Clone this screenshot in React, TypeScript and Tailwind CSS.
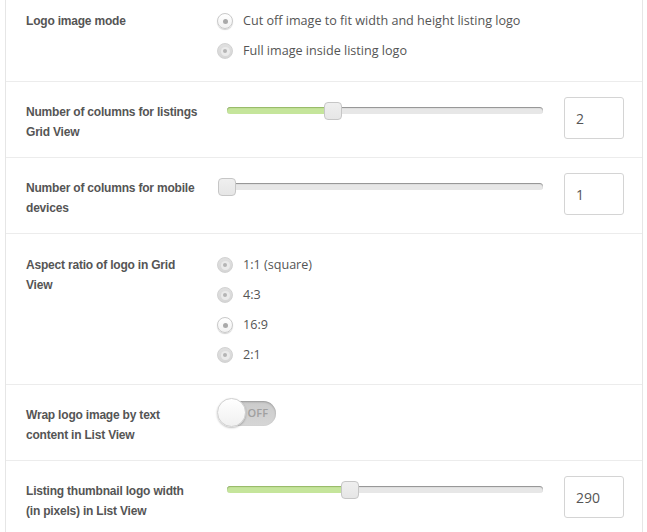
import React from "react";

const labelFont = {
  fontFamily: '"Liberation Sans", Arial, sans-serif',
};
const bodyFont = { fontFamily: '"Open Sans", "Noto Sans", sans-serif' };

function Radio({ checked, label }: { checked?: boolean; label: string }) {
  return (
    <div className="flex h-[30px] items-center">
      {checked ? (
        <span className="flex h-[16px] w-[16px] items-center justify-center rounded-full border border-[#c9c9c9] bg-[linear-gradient(#ffffff,#f1f1f1)] shadow-[0_1px_1px_rgba(0,0,0,0.18)]">
          <span className="h-[5px] w-[5px] rounded-full bg-[#a9a9a9]" />
        </span>
      ) : (
        <span className="flex h-[16px] w-[16px] items-center justify-center rounded-full border border-[#d2d2d2] bg-[linear-gradient(#e0e0e0,#d6d6d6)]">
          <span className="flex h-[9px] w-[9px] items-center justify-center rounded-full bg-[#ebebeb]">
            <span className="h-[4px] w-[4px] rounded-full bg-[#b5b5b5]" />
          </span>
        </span>
      )}
      <span className="ml-[10px] text-[12.6px] text-[#555]" style={bodyFont}>
        {label}
      </span>
    </div>
  );
}

function Slider({ pos }: { pos: number }) {
  return (
    <div className="relative ml-[10px] mt-[25px] h-[7px] w-[316px] rounded-full bg-[#e7e7e7] shadow-[inset_0_1px_1px_rgba(0,0,0,0.38)]">
      <div
        className="absolute left-0 top-0 h-[7px] rounded-full bg-[#c5e59b] shadow-[inset_0_1px_1px_rgba(60,100,0,0.35)]"
        style={{ width: pos }}
      />
      <div
        className="absolute top-[-5px] h-[18px] w-[18px] rounded-[4px] border border-[#c6c6c6] bg-[linear-gradient(#efefef,#e6e6e6)]"
        style={{ left: pos - 9 }}
      />
    </div>
  );
}

function NumBox({ value }: { value: string }) {
  return (
    <div
      className="ml-[21px] mt-[15px] flex h-[42px] w-[60px] items-center rounded-[3px] border border-[#d4d4d4] pl-[11px] text-[14px] text-[#555]"
      style={bodyFont}
    >
      {value}
    </div>
  );
}

function Label({ children, pt }: { children: React.ReactNode; pt: string }) {
  return (
    <div
      className={`w-[211px] shrink-0 pl-5 text-[12px] font-bold leading-[20px] tracking-[-0.2px] text-[#555] ${pt}`}
      style={labelFont}
    >
      {children}
    </div>
  );
}

export default function App() {
  return (
    <div className="min-h-[532px] w-[647px] bg-white">
      <div className="ml-[5px] w-[638px] border-x border-[#e6e6e6]">
        <div className="flex h-[82px] border-b border-[#ececec]">
          <Label pt="pt-[11px]">Logo image mode</Label>
          <div className="pt-[6px]">
            <Radio checked label="Cut off image to fit width and height listing logo" />
            <Radio label="Full image inside listing logo" />
          </div>
        </div>

        <div className="flex h-[76px] border-b border-[#ececec]">
          <Label pt="pt-[20px]">
            Number of columns for listings
            <br />
            Grid View
          </Label>
          <div className="flex items-start">
            <Slider pos={106} />
            <NumBox value="2" />
          </div>
        </div>

        <div className="flex h-[76px] border-b border-[#ececec]">
          <Label pt="pt-[20px]">
            Number of columns for mobile
            <br />
            devices
          </Label>
          <div className="flex items-start">
            <Slider pos={0} />
            <NumBox value="1" />
          </div>
        </div>

        <div className="flex h-[151px] border-b border-[#ececec]">
          <Label pt="pt-[21px]">
            Aspect ratio of logo in Grid
            <br />
            View
          </Label>
          <div className="pt-[16px]">
            <Radio label="1:1 (square)" />
            <Radio label="4:3" />
            <Radio checked label="16:9" />
            <Radio label="2:1" />
          </div>
        </div>

        <div className="flex h-[76px] border-b border-[#ececec]">
          <Label pt="pt-[20px]">
            Wrap logo image by text
            <br />
            content in List View
          </Label>
          <div className="pt-[13px]">
            <div className="relative h-[29px] w-[60px]">
              <div className="absolute left-[1px] top-[3px] flex h-[25px] w-[58px] items-center justify-end rounded-full bg-[linear-gradient(#cbcbcb,#d6d6d6)] pr-[8px] shadow-[inset_0_1px_2px_rgba(0,0,0,0.25)]">
                <span
                  className="text-[11px] font-semibold text-[#a0a0a0]"
                  style={bodyFont}
                >
                  OFF
                </span>
              </div>
              <div className="absolute left-0 top-0 h-[29px] w-[29px] rounded-full border border-[#cfcfcf] bg-[linear-gradient(#ffffff,#f0f0f0)] shadow-[0_1px_2px_rgba(0,0,0,0.25)]" />
            </div>
          </div>
        </div>

        <div className="flex h-[76px]">
          <Label pt="pt-[20px]">
            Listing thumbnail logo width
            <br />
            (in pixels) in List View
          </Label>
          <div className="flex items-start">
            <Slider pos={123} />
            <NumBox value="290" />
          </div>
        </div>
      </div>
    </div>
  );
}
